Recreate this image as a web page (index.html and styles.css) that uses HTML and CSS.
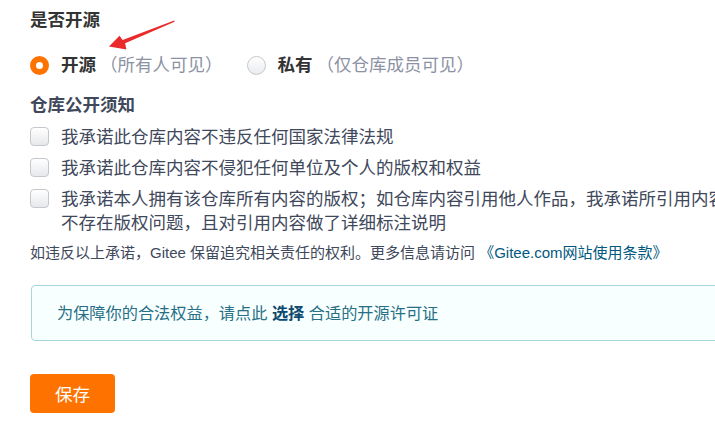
FILE: index.html
```html
<!DOCTYPE html>
<html lang="zh-CN">
<head>
    <meta charset="UTF-8">
    <meta name="viewport" content="width=device-width, initial-scale=1.0">
    <title>仓库设置</title>
    <link rel="stylesheet" href="styles.css">
</head>
<body>
    <div class="settings-form">
        <div class="field-title">是否开源</div>

        <div class="radio-row">
            <label class="radio-option">
                <span class="radio checked"></span>
                <span class="option-name">开源</span>
                <span class="option-hint">（所有人可见）</span>
            </label>
            <label class="radio-option">
                <span class="radio"></span>
                <span class="option-name">私有</span>
                <span class="option-hint">（仅仓库成员可见）</span>
            </label>
        </div>

        <div class="section-title">仓库公开须知</div>

        <div class="check-list">
            <label class="check-item">
                <span class="checkbox"></span>
                <span class="check-text">我承诺此仓库内容不违反任何国家法律法规</span>
            </label>
            <label class="check-item">
                <span class="checkbox"></span>
                <span class="check-text">我承诺此仓库内容不侵犯任何单位及个人的版权和权益</span>
            </label>
            <label class="check-item">
                <span class="checkbox"></span>
                <span class="check-text">我承诺本人拥有该仓库所有内容的版权；如仓库内容引用他人作品，我承诺所引用内容<br>不存在版权问题，且对引用内容做了详细标注说明</span>
            </label>
        </div>

        <div class="notice">如违反以上承诺，Gitee 保留追究相关责任的权利。更多信息请访问 <a href="#" class="notice-link">《Gitee.com网站使用条款》</a></div>

        <div class="info-message">为保障你的合法权益，请点此 <a href="#" class="info-link">选择</a> 合适的开源许可证</div>

        <button class="save-button">保存</button>

        <!-- annotation arrow drawn over the screenshot -->
        <svg class="annotation-arrow" width="80" height="40" viewBox="100 5 80 40">
            <polygon points="109,38.6 119.5,27.8 122.6,31.9 174.2,12.6 174.6,13.8 125.1,35.3 126.4,41.6" fill="#ea2a2a"/>
        </svg>
    </div>
</body>
</html>
```

FILE: styles.css
```css
html, body {
    margin: 0;
    padding: 0;
    background: #fff;
    overflow: hidden;
}

body {
    font-family: "Liberation Sans", "Noto Sans CJK SC", sans-serif;
    color: #40485b;
}

.settings-form {
    position: relative;
    width: 760px;
    padding-left: 30px;
}

.field-title {
    margin-top: 8px;
    font-size: 17.5px;
    line-height: 24px;
    font-weight: bold;
    color: #333;
}

.radio-row {
    display: flex;
    margin-top: 21px;
    gap: 24px;
}

.radio-option {
    display: flex;
    align-items: center;
    font-size: 17.5px;
    line-height: 24px;
}

.radio {
    width: 17px;
    height: 17px;
    border-radius: 50%;
    border: 1px solid #c4c7cc;
    background: linear-gradient(#ffffff, #e9ebee);
    margin-right: 12px;
    box-sizing: content-box;
}

.radio.checked {
    width: 7px;
    height: 7px;
    border: 6px solid #fe7300;
    background: #fff;
}

.option-name {
    font-weight: bold;
    color: #333;
}

.option-hint {
    color: #8c92a4;
    margin-left: 4px;
}

.section-title {
    margin-top: 16px;
    font-size: 17.5px;
    line-height: 24px;
    font-weight: bold;
    color: #40485b;
}

.check-list {
    display: flex;
    flex-direction: column;
    gap: 7px;
    margin-top: 8px;
}

.check-item {
    display: flex;
    align-items: flex-start;
    font-size: 17.5px;
    line-height: 24px;
    white-space: nowrap;
}

.checkbox {
    flex: none;
    width: 17px;
    height: 17px;
    margin-top: 2px;
    margin-right: 12px;
    border: 1px solid #c4c7cc;
    border-radius: 4px;
    background: linear-gradient(#ffffff, #e6e8eb);
}

.check-text {
    color: #40485b;
}

.notice {
    margin-top: 8px;
    font-size: 15px;
    line-height: 20px;
    color: #40485b;
}

.notice-link {
    color: #005980;
    text-decoration: none;
}

.info-message {
    margin-top: 22px;
    margin-left: 1px;
    padding: 15px 25px;
    font-size: 16.2px;
    line-height: 24px;
    color: #276f86;
    background: #f8ffff;
    border: 1px solid #a9d5de;
    border-radius: 4px;
}

.info-link {
    color: #0b4a6e;
    font-weight: bold;
    text-decoration: none;
}

.save-button {
    display: block;
    margin-top: 33px;
    width: 85px;
    height: 39px;
    border: none;
    border-radius: 4px;
    background: #fe7300;
    color: #fff;
    font-family: "Liberation Sans", "Noto Sans CJK SC", sans-serif;
    font-size: 17.5px;
    cursor: pointer;
}

.annotation-arrow {
    position: absolute;
    left: 100px;
    top: 5px;
}
```
